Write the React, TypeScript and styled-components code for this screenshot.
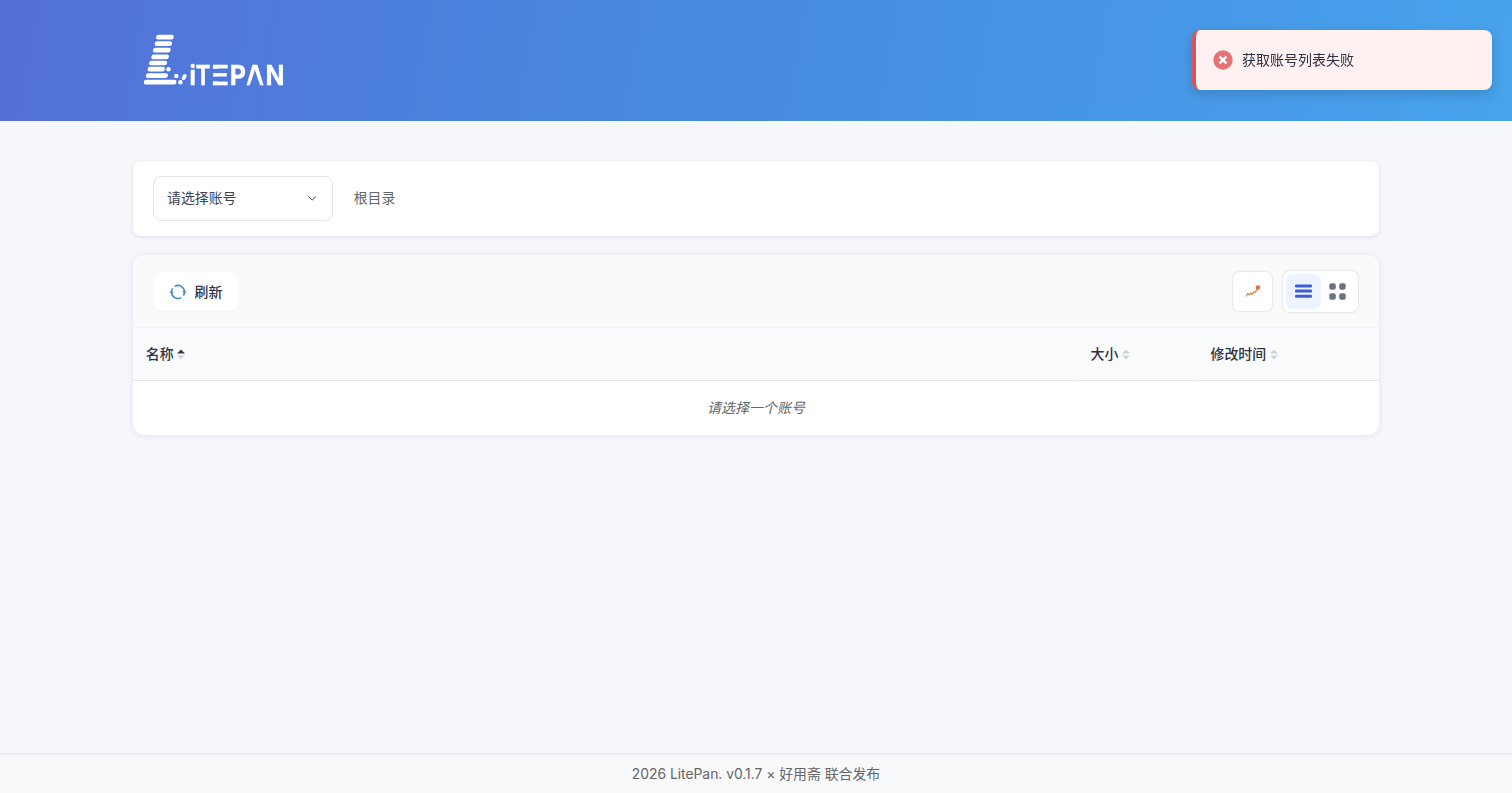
import React from "react";
import styled, { createGlobalStyle } from "styled-components";

const Global = createGlobalStyle`
  * { box-sizing: border-box; }
  body { margin: 0; background: #f5f7fb; color: #2d3142; font: 13.9px/1.6 Inter, "Noto Sans CJK SC", sans-serif; }
  button { font: inherit; color: inherit; }
`;
const Page = styled.div`min-height: 793px; display: flex; flex-direction: column;`;
const Header = styled.header`
  height: 121px; padding: 30px 142px 0;
  background: linear-gradient(100deg, #5570d9 0%, #4788e0 43%, #47a3ec 100%);
`;
const Main = styled.main`
  flex: 1; width: 1246px; margin: 0 auto; padding-top: 40px;
  display: flex; flex-direction: column; gap: 19px;
`;
const PathBar = styled.section`
  height: 75px; padding: 0 20px; display: flex; align-items: center; gap: 20.7px;
  background: #fff; border-radius: 8px; color: #666; box-shadow: 0 1px 4px rgba(30,40,70,.12);
`;
const Select = styled.button`
  width: 180px; height: 45px; padding: 0 15px 0 13px; display: flex; align-items: center; justify-content: space-between;
  background: #fff; color: #3d4152; border: 1px solid #e4e6ea; border-radius: 8px;
`;
const Panel = styled.section`
  height: 180px; overflow: hidden; background: #fff; border-radius: 12px; box-shadow: 0 1px 6px rgba(30,40,70,.09);
`;
const Toolbar = styled.div`
  height: 73px; padding: 0 20px; display: flex; align-items: center; justify-content: space-between;
  background: #fafafa; border-bottom: 1px solid #f0f1f3;
`;
const Refresh = styled.button`
  width: 86px; height: 41px; padding: 2px 0 0 15px; display: flex; align-items: center; gap: 7.5px;
  background: #fff; border: 1px solid #f6f6f7; border-radius: 8px; font-weight: 500;
`;
const Tools = styled.div`display: flex; align-items: center; gap: 9px;`;
const ToolButton = styled.button`
  width: 41px; height: 41px; padding: 0; display: grid; place-items: center;
  background: #fff; border: 1px solid #e9eaee; border-radius: 8px; box-shadow: 0 0 2px rgba(0,0,0,.05);
`;
const ViewSwitch = styled.div`
  width: 77px; height: 43px; padding: 3px; display: flex;
  background: #fff; border: 1px solid #e9eaee; border-radius: 8px; box-shadow: 0 0 2px rgba(0,0,0,.06);
`;
const ViewButton = styled.button<{ $active?: boolean }>`
  width: 35px; height: 35px; padding: 0; display: grid; place-items: center; border: 0; border-radius: 6px;
  background: ${(p) => (p.$active ? "#edf3ff" : "transparent")};
`;
const Columns = styled.div`
  height: 53px; display: grid; grid-template-columns: 942px 120px 1fr;
  background: #f9fbfd; border-bottom: 1px solid #e3e5e9;
`;
const Column = styled.div<{ $first?: boolean }>`
  display: flex; align-items: center; gap: 3.8px; padding-left: ${(p) => (p.$first ? 12.8 : 14.5)}px;
  font-weight: 500; border-left: ${(p) => (p.$first ? "0" : "1px solid #f6f8fa")};
`;
const Empty = styled.div`
  height: 54px; display: flex; align-items: center; justify-content: center;
  color: #666; font-size: 14px; font-style: italic;
`;
const Footer = styled.footer`
  height: 40px; display: flex; align-items: center; justify-content: center;
  background: #f8f9fb; border-top: 2px solid #e9ebee; color: #666; letter-spacing: -0.03px;
`;
const Toast = styled.div`
  position: fixed; top: 30px; right: 20px; width: 300px; height: 60px; padding-left: 17px;
  display: flex; align-items: center; gap: 9px; border-left: 4px solid #d9555a; border-radius: 8px;
  background: #fdf2f1; box-shadow: 0 4px 12px rgba(0,0,0,.16); font-size: 14px;
`;

const bars = [
  [14.2, 7.2, 17.5], [12.8, 13.6, 17.2], [11, 20.2, 17.7], [9.4, 26.8, 17.5],
  [7.2, 33, 18], [5.7, 39.2, 17.3], [4, 45.7, 22], [2, 52.2, 32.5],
];
const letters: [string, number, number][] = [
  ["i", 47.4, 6.4], ["T", 53.8, 14.6], ["E", 69.2, 17.6], ["P", 87.8, 16.2], ["A", 104.2, 17.6], ["N", 123.4, 19],
];

const Logo = () => (
  <svg width="148" height="70" viewBox="0 0 148 70" fill="#fff" role="img" aria-label="LitePan">
    <mask id="cuts" maskUnits="userSpaceOnUse" x="0" y="0" width="148" height="70">
      <rect width="148" height="70" fill="#fff" />
      <rect x="69" y="38.9" width="18" height="4.2" fill="#000" />
      <rect x="69" y="46.7" width="18" height="4.5" fill="#000" />
      <path d="M107.4 56 112.9 41 118.4 56Z" fill="#000" />
    </mask>
    {bars.map(([x, y, w]) => (
      <rect key={y} x={x} y={y - 2.35} width={w} height="4.7" rx="2" transform={`translate(${y * 0.12} 0) skewX(-7)`} />
    ))}
    <circle cx="26.5" cy="39.2" r="2.2" /><circle cx="34.3" cy="46" r="2.2" />
    <circle cx="38.4" cy="52.3" r="2.2" />
    <path d="m41.6 48.2 1.2-2.2" stroke="#fff" strokeWidth="3.8" strokeLinecap="round" />
    <g mask="url(#cuts)" fontFamily="Inter, sans-serif" fontWeight="700" fontSize="27.2" stroke="#fff" strokeWidth=".4">
      {letters.map(([c, x, w]) => (
        <text key={c} x={x} y="55" textLength={w} lengthAdjust="spacingAndGlyphs">{c}</text>
      ))}
    </g>
  </svg>
);

const Sort = ({ asc }: { asc?: boolean }) => (
  <svg width="8" height="12" viewBox="0 0 8 12">
    <path d="M0 5.6 4 1.6 8 5.6Z" fill={asc ? "#333644" : "#cfd1d7"} />
    <path d="M0 7.6H8L4 11.6Z" fill="#d3d5da" />
  </svg>
);

export default function App() {
  return (
    <Page>
      <Global />
      <Header><Logo /></Header>
      <Main>
        <PathBar>
          <Select>
            请选择账号
            <svg width="10" height="10" viewBox="0 0 10 10" fill="none" stroke="#444" strokeWidth="1"><path d="m1.5 2.5 3.7 3.5 3.7-3.5" /></svg>
          </Select>
          <span>根目录</span>
        </PathBar>
        <Panel>
          <Toolbar>
            <Refresh>
              <svg width="18" height="18" viewBox="0 0 18 18" fill="none" stroke="#4c8cba" strokeWidth="1.6">
                <path d="M5.7 3.4A6.5 6.5 0 0 1 15.5 9M12.3 14.6A6.5 6.5 0 0 1 2.5 9" />
                <path d="M3.6 5.4A6.5 6.5 0 0 0 2.5 8M14.4 12.6A6.5 6.5 0 0 0 15.5 10" />
                <path d="M13.2 8.2h4.5l-2.2 2.8zM.3 9.8h4.5L2.5 7z" fill="#4c8cba" stroke="none" />
              </svg>
              刷新
            </Refresh>
            <Tools>
              <ToolButton aria-label="trend">
                <svg width="16" height="16" viewBox="0 0 16 16" fill="none" stroke="#dc7c43" strokeWidth="1.2">
                  <path d="m1 13.5 1.8-3 1.4 1.4 1.5-1.8 1.5 1.2L9 8.7l1.4.5L13 5" /><circle cx="13" cy="4.5" r="2.2" fill="#dc6f43" stroke="none" />
                </svg>
              </ToolButton>
              <ViewSwitch>
                <ViewButton $active aria-label="list">
                  <svg width="17" height="15" viewBox="0 0 17 15" fill="#405fcd"><rect y=".5" width="17" height="3" rx="1.2" /><rect y="5.6" width="17" height="3" rx="1.2" /><rect y="10.7" width="17" height="3" rx="1.2" /></svg>
                </ViewButton>
                <ViewButton aria-label="grid">
                  <svg width="17" height="17" viewBox="0 0 17 17" fill="#6b7280"><rect x=".3" y=".3" width="6.5" height="6.5" rx="2" /><rect x="10.2" y=".3" width="6.5" height="6.5" rx="2" /><rect x=".3" y="10.2" width="6.5" height="6.5" rx="2" /><rect x="10.2" y="10.2" width="6.5" height="6.5" rx="2" /></svg>
                </ViewButton>
              </ViewSwitch>
            </Tools>
          </Toolbar>
          <Columns>
            <Column $first>名称<Sort asc /></Column>
            <Column>大小<Sort /></Column>
            <Column>修改时间<Sort /></Column>
          </Columns>
          <Empty>请选择一个账号</Empty>
        </Panel>
      </Main>
      <Footer>2026 LitePan. v0.1.7 × 好用斋 联合发布</Footer>
      <Toast>
        <svg width="20" height="20" viewBox="0 0 20 20"><circle cx="10" cy="10" r="9.7" fill="#e57373" /><path d="m6.6 6.6 6.8 6.8m0-6.8-6.8 6.8" stroke="#fff" strokeWidth="2.4" /></svg>
        获取账号列表失败
      </Toast>
    </Page>
  );
}
